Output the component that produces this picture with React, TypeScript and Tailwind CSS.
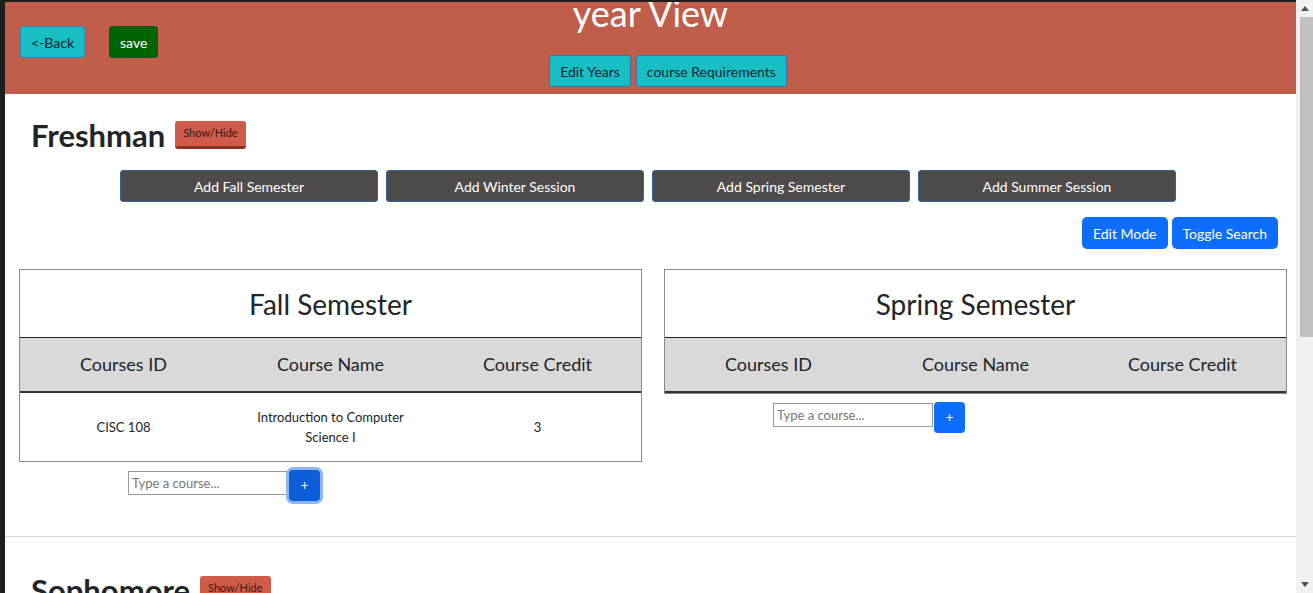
import React from "react";

const font = { fontFamily: "Lato, 'Open Sans', sans-serif" };

type Course = { id: string; name: string; credit: number };

function SemesterTable({ title, courses, focused }: { title: string; courses: Course[]; focused?: boolean }) {
  return (
    <div className="w-[623px]">
      <div className="border border-[#8a8a8a]">
        <div className="flex h-[67px] items-center justify-center text-[28px] text-[#212529]">{title}</div>
        <div className="grid h-[56px] grid-cols-3 items-center border-t border-b-2 border-t-[#222] border-b-[#333] bg-[#d9d9d9] text-center text-[18px] text-[#212529]">
          <div>Courses ID</div>
          <div>Course Name</div>
          <div>Course Credit</div>
        </div>
        {courses.map((c) => (
          <div key={c.id} className="grid h-[68px] grid-cols-3 items-center text-center text-[13px] leading-[20px] text-[#212529]">
            <div>{c.id}</div>
            <div className="mx-auto max-w-[165px]">{c.name}</div>
            <div>{c.credit}</div>
          </div>
        ))}
      </div>
      <div className="ml-[109px] mt-[8px] flex items-start">
        <input
          type="text"
          placeholder="Type a course..."
          className="mt-[1px] h-[24px] w-[160px] border border-[#999] px-[3px] text-[13px] text-[#333] placeholder:text-[#777] outline-none"
        />
        <button
          type="button"
          className={`ml-[1px] flex h-[31px] w-[31px] items-center justify-center rounded-[4px] text-[13px] text-white ${
            focused ? "bg-[#0b5ed7] ring-[3px] ring-[#8fb6f5]" : "bg-[#0d6efd]"
          }`}
        >
          +
        </button>
      </div>
    </div>
  );
}

function YearHeading({ name }: { name: string }) {
  return (
    <div className="flex items-center gap-[10px] pl-[26px]">
      <h2 className="text-[31px] font-bold leading-none text-[#212529]">{name}</h2>
      <button
        type="button"
        className="-mt-[2px] h-[28px] rounded-[3px] border-b-[3px] border-b-[#8a3427] bg-[#cf5b48] px-[8px] text-[11px] text-[#3a1a14]"
      >
        Show/Hide
      </button>
    </div>
  );
}

export default function App() {
  const fall: Course[] = [{ id: "CISC 108", name: "Introduction to Computer Science I", credit: 3 }];
  const addButtons = ["Add Fall Semester", "Add Winter Session", "Add Spring Semester", "Add Summer Session"];

  return (
    <div className="flex h-[593px] w-full overflow-hidden bg-white" style={font}>
      <div className="w-[5px] shrink-0 bg-[#1e1e1e]" />
      <div className="flex min-w-0 flex-1 flex-col">
        <div className="h-[2px] shrink-0 bg-[#1e1e1e]" />
        <header className="grid h-[92px] shrink-0 grid-cols-[1fr_auto_1fr] overflow-hidden bg-[#c15e4b]">
          <div className="flex items-start gap-[24px] pl-[15px] pt-[24px]">
            <button
              type="button"
              className="h-[32px] rounded-[3px] border border-[#2f86b8] bg-[#17bec4] px-[10px] text-[14px] text-[#123]"
            >
              &lt;-Back
            </button>
            <button
              type="button"
              className="h-[32px] rounded-[3px] border border-[#1d4f2a] bg-[#006400] px-[10px] text-[14px] text-white"
            >
              save
            </button>
          </div>
          <div className="flex flex-col items-center">
            <h1 className="-mt-[7px] text-[36px] leading-none text-white">year View</h1>
            <div className="ml-[35px] mt-[24px] flex gap-[5px]">
              <button
                type="button"
                className="h-[32px] rounded-[3px] border border-[#3c6fa8] bg-[#17bec4] px-[10px] text-[14px] text-[#1a2530]"
              >
                Edit Years
              </button>
              <button
                type="button"
                className="h-[32px] rounded-[3px] border border-[#3c6fa8] bg-[#17bec4] px-[10px] text-[14px] text-[#1a2530]"
              >
                course Requirements
              </button>
            </div>
          </div>
          <div />
        </header>

        <section className="shrink-0 pt-[26px]">
          <YearHeading name="Freshman" />
          <div className="mt-[19px] flex justify-center gap-[8px] pr-[5px]">
            {addButtons.map((b) => (
              <button
                key={b}
                type="button"
                className="h-[32px] w-[258px] rounded-[3px] border border-[#31669a] bg-[#504b4b] text-[14px] text-white"
              >
                {b}
              </button>
            ))}
          </div>
          <div className="mt-[15px] flex justify-end gap-[4px] pr-[18px]">
            <button type="button" className="h-[32px] rounded-[5px] bg-[#0d6efd] px-[11px] text-[14px] text-white">
              Edit Mode
            </button>
            <button type="button" className="h-[32px] rounded-[5px] bg-[#0d6efd] px-[11px] text-[14px] text-white">
              Toggle Search
            </button>
          </div>
          <div className="mt-[20px] flex gap-[22px] pl-[14px]">
            <SemesterTable title="Fall Semester" courses={fall} focused />
            <SemesterTable title="Spring Semester" courses={[]} />
          </div>
          <div className="mt-[35px] border-b border-[#dcdcdc]" />
        </section>

        <section className="shrink-0 pt-[38px]">
          <YearHeading name="Sophomore" />
        </section>
      </div>

      <div className="flex w-[17px] shrink-0 flex-col bg-[#f1f1f1]">
        <div className="flex h-[17px] items-center justify-center">
          <svg width="8" height="5" viewBox="0 0 8 5">
            <path d="M0 5 L4 0 L8 5 Z" fill="#505050" />
          </svg>
        </div>
        <div className="ml-[4px] h-[320px] bg-[#c1c1c1]" />
        <div className="flex-1" />
        <div className="flex h-[17px] items-center justify-center">
          <svg width="8" height="5" viewBox="0 0 8 5">
            <path d="M0 0 L4 5 L8 0 Z" fill="#505050" />
          </svg>
        </div>
      </div>
    </div>
  );
}
